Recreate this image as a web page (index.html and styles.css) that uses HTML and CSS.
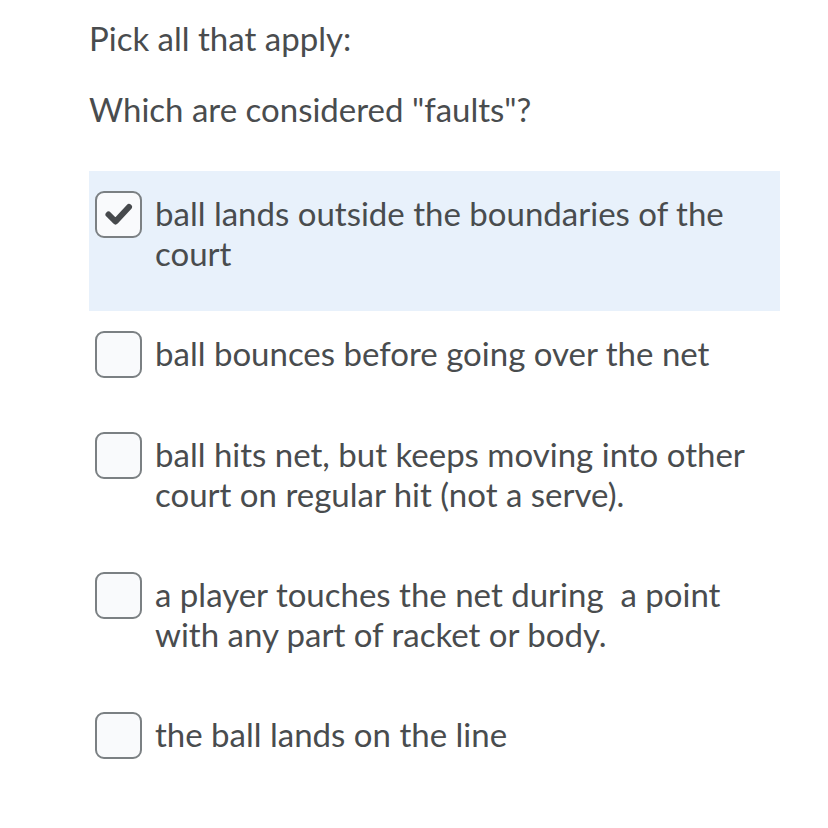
FILE: index.html
```html
<!DOCTYPE html>
<html>
<head>
<meta charset="utf-8">
<link rel="stylesheet" href="styles.css">
</head>
<body>
<div class="question">
  <p class="prompt">Pick all that apply:</p>
  <p class="prompt prompt-q">Which are considered "faults"?</p>
  <ul class="options">
    <li class="option selected">
      <span class="box">
        <svg viewBox="0 0 43 43" width="43" height="43"><path d="M11.5 21.5 L18.5 28.5 L32 14" fill="none" stroke="#46494c" stroke-width="6" stroke-linecap="round" stroke-linejoin="round"/></svg>
      </span>
      <span class="label">ball lands outside the boundaries of the court</span>
    </li>
    <li class="option">
      <span class="box"></span>
      <span class="label">ball bounces before going over the net</span>
    </li>
    <li class="option">
      <span class="box"></span>
      <span class="label">ball hits net, but keeps moving into other court on regular hit (not a serve).</span>
    </li>
    <li class="option">
      <span class="box"></span>
      <span class="label">a player touches the net during &nbsp;a point with any part of racket or body.</span>
    </li>
    <li class="option">
      <span class="box"></span>
      <span class="label">the ball lands on the line</span>
    </li>
  </ul>
</div>
</body>
</html>
```
FILE: styles.css
```css
html, body {
  margin: 0;
  padding: 0;
  background: #ffffff;
}
body {
  font-family: Lato, "Open Sans", sans-serif;
  font-size: 33px;
  line-height: 40px;
  color: #494c4e;
}
.question {
  width: 691px;
  padding: 18px 0 0 89px;
}
.prompt {
  margin: 0 0 31px 0;
}
.prompt-q {
  margin-bottom: 42px;
}
.options {
  list-style: none;
  margin: 0;
  padding: 0;
}
.option {
  display: flex;
  align-items: flex-start;
  gap: 13px;
  padding: 20px 0 34px 6px;
}
.option.selected {
  background: #e8f1fb;
}
.box {
  flex: none;
  width: 43px;
  height: 43px;
  border: 2px solid #7b8083;
  border-radius: 9px;
  background: #f9fafc;
  display: flex;
  align-items: center;
  justify-content: center;
}
.box svg {
  width: 43px;
  height: 43px;
}
.label {
  padding: 2px 0 4px;
  flex: 1;
}
```
